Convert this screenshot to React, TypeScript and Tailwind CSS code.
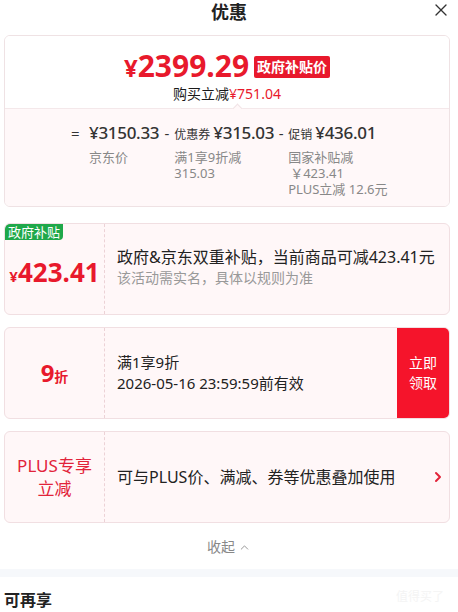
import { X, ChevronRight, ChevronUp } from 'lucide-react';

const font = { fontFamily: '"Noto Sans", "Noto Sans CJK SC", sans-serif' };

function Card({ children, className = '' }: { children: React.ReactNode; className?: string }) {
  return (
    <div
      className={`relative ml-1 w-[446px] overflow-hidden rounded-md border border-[#f1dfe2] bg-[#fff7f8] ${className}`}
    >
      {children}
    </div>
  );
}

export default function App() {
  return (
    <div className="h-[612px] w-[458px] overflow-hidden bg-white text-[#1a1a1a]" style={font}>
      {/* Header */}
      <div className="relative flex h-[24px] items-center justify-center">
        <h1 className="text-[18px] font-bold leading-none text-[#222]">优惠</h1>
        <X className="absolute right-[7px] top-0 h-[20px] w-[20px] text-[#333]" strokeWidth={1.6} />
      </div>

      {/* Price summary */}
      <div className="ml-1 mt-[11px] w-[446px] overflow-hidden rounded-md border border-[#efe2e4]">
        <div className="flex flex-col items-center bg-white pb-[5px] pt-[14px]">
          <div className="flex items-center gap-[5px]">
            <span className="text-[30px] font-bold leading-[32px] text-[#e8192c]">
              <span className="text-[24px]">¥</span>2399.29
            </span>
            <span className="rounded-[2px] bg-[#e8192c] px-[3px] py-[1px] text-[14px] font-bold leading-[20px] text-white">
              政府补贴价
            </span>
          </div>
          <div className="mt-[1px] text-[14px] leading-[18px]">
            购买立减<span className="text-[#e8192c]">¥751.04</span>
          </div>
        </div>
        <div className="relative border-t border-[#f4e8ea] bg-[#fff8f9] pb-[9px] pl-[66px] pt-[12px]">
          <div className="absolute left-[229px] top-[-4px] h-[7px] w-[7px] rotate-45 border-l border-t border-[#f1e4e6] bg-[#fff8f9]" />
          <div className="flex items-start text-[#333]">
            <div className="flex flex-col">
              <div className="flex items-baseline">
                <span className="w-[18px] text-[15px]">=</span>
                <span className="text-[17px] font-medium leading-[24px] tracking-[-0.3px]">¥3150.33</span>
              </div>
              <span className="pl-[18px] pt-[4px] text-[13px] leading-[16px] text-[#888]">京东价</span>
            </div>
            <div className="flex flex-col">
              <div className="flex items-baseline">
                <span className="w-[15px] text-center text-[15px]">-</span>
                <span className="text-[12px]">优惠券</span>
                <span className="ml-[3px] text-[17px] font-medium leading-[24px] tracking-[-0.3px]">¥315.03</span>
              </div>
              <div className="flex flex-col pl-[15px] pt-[4px] text-[13px] leading-[16px] text-[#888]">
                <span>满1享9折减</span>
                <span>315.03</span>
              </div>
            </div>
            <div className="flex flex-col">
              <div className="flex items-baseline">
                <span className="w-[14px] text-center text-[15px]">-</span>
                <span className="text-[12px]">促销</span>
                <span className="ml-[3px] text-[17px] font-medium leading-[24px] tracking-[-0.3px]">¥436.01</span>
              </div>
              <div className="flex flex-col pl-[14px] pt-[4px] text-[13px] leading-[16px] text-[#888]">
                <span>国家补贴减</span>
                <span className="pl-[2px]">￥423.41</span>
                <span>PLUS立减 12.6元</span>
              </div>
            </div>
          </div>
        </div>
      </div>

      {/* Gov subsidy */}
      <Card className="mt-[16px] flex h-[92px]">
        <span className="absolute left-0 top-0 rounded-br-[4px] rounded-tl-[4px] bg-[#1fa84a] px-[3px] text-[13px] leading-[16px] text-white">
          政府补贴
        </span>
        <div className="flex w-[100px] shrink-0 items-center justify-center border-r border-dashed border-[#ecd2d6] pt-[6px]">
          <span className="text-[26px] font-bold text-[#e8192c]">
            <span className="text-[15px]">¥</span>423.41
          </span>
        </div>
        <div className="flex flex-col justify-center pb-[4px] pl-[12px]">
          <span className="text-[16px] leading-[22px] text-[#222]">政府&京东双重补贴，当前商品可减423.41元</span>
          <span className="text-[14px] leading-[20px] text-[#999]">该活动需实名，具体以规则为准</span>
        </div>
      </Card>

      {/* Coupon */}
      <Card className="mt-[12px] flex h-[92px]">
        <div className="flex w-[100px] shrink-0 items-center justify-center border-r border-dashed border-[#ecd2d6]">
          <span className="text-[24px] font-bold text-[#e8192c]">
            9<span className="text-[14px]">折</span>
          </span>
        </div>
        <div className="flex flex-1 flex-col justify-center pl-[12px]">
          <span className="text-[15px] leading-[21px] text-[#222]">满1享9折</span>
          <span className="text-[15px] leading-[21px] text-[#222]">2026-05-16 23:59:59前有效</span>
        </div>
        <button className="flex w-[52px] shrink-0 items-center justify-center bg-[#f5142b] text-[14px] leading-[20px] text-white">
          立即
          <br />
          领取
        </button>
      </Card>

      {/* PLUS */}
      <Card className="mt-[12px] flex h-[92px]">
        <div className="flex w-[100px] shrink-0 items-center justify-center border-r border-dashed border-[#ecd2d6] text-center text-[17px] leading-[23px] text-[#e2233a]">
          PLUS专享
          <br />
          立减
        </div>
        <div className="flex flex-1 items-center pl-[12px] text-[16px] text-[#222]">可与PLUS价、满减、券等优惠叠加使用</div>
        <div className="flex items-center pr-[3px]">
          <ChevronRight className="h-[16px] w-[16px] text-[#e2233a]" strokeWidth={3} />
        </div>
      </Card>

      {/* Collapse */}
      <div className="mt-[14px] flex items-center justify-center gap-[3px] text-[14px] leading-[20px] text-[#888]">
        收起
        <ChevronUp className="h-[13px] w-[13px]" strokeWidth={1.6} />
      </div>

      <div className="mt-[12px] h-[8px] bg-[#f6f8fb]" />

      <div className="relative mt-[12px] pl-[4px] text-[16px] font-bold leading-[22px] text-[#222]">
        可再享
        <span className="absolute right-[14px] top-0 text-[12px] font-normal leading-[16px] text-[#f4f4f4]">值得买了</span>
      </div>
    </div>
  );
}
